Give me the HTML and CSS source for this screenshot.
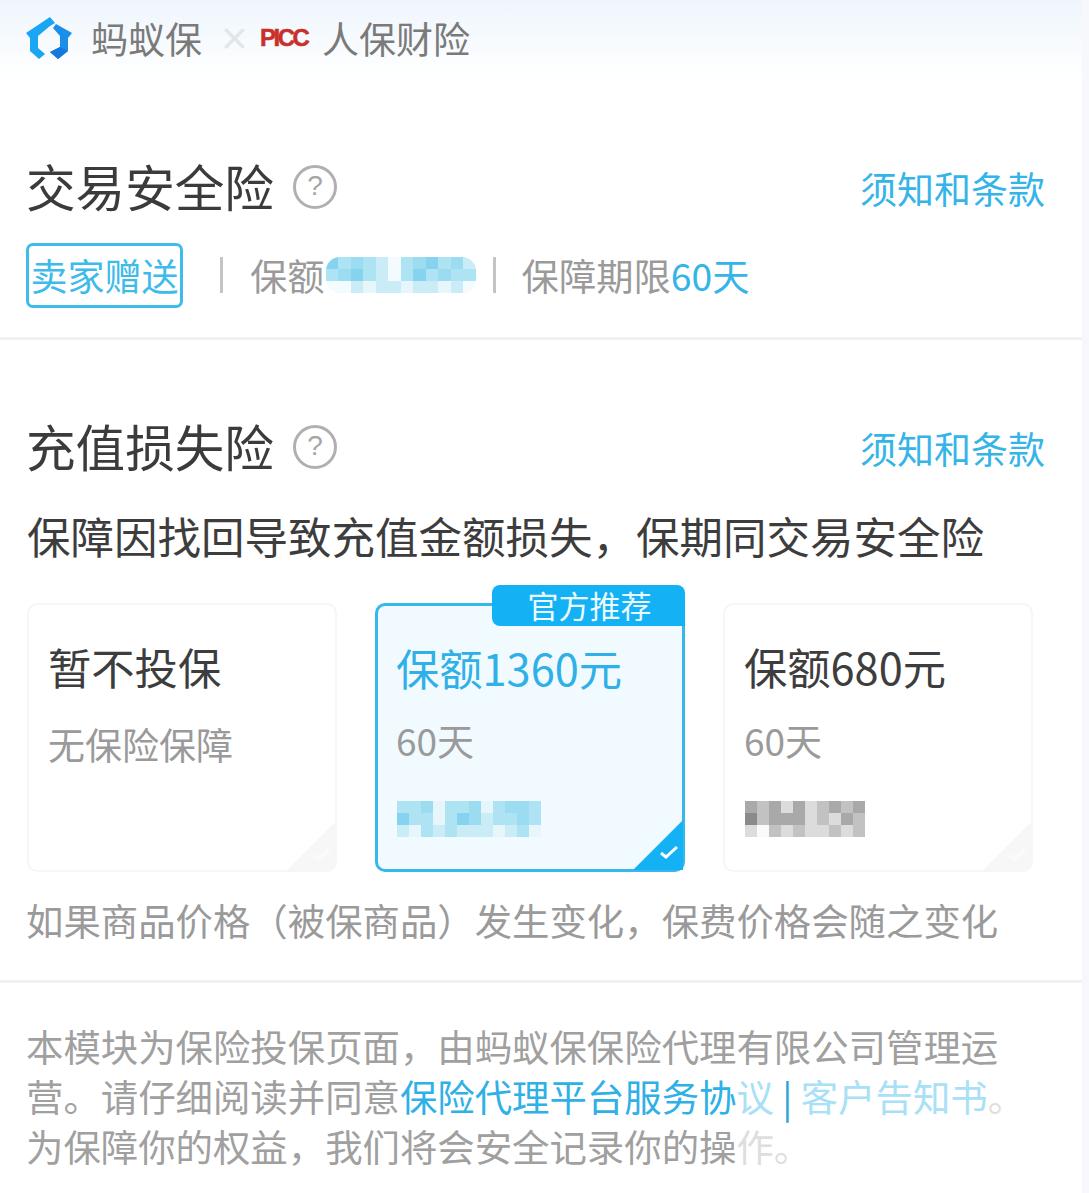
FILE: index.html
```html
<!DOCTYPE html>
<html lang="zh-CN">
<head>
    <meta charset="UTF-8">
    <meta name="viewport" content="width=device-width, initial-scale=1.0">
    <title>交易安全险</title>
    <link rel="stylesheet" href="styles.css">
</head>
<body>
    <div class="page">
        <div class="brand">
            <svg class="brand-logo" width="47" height="42" viewBox="0 0 47 42">
                <path d="M24 0 L0 16 L4 21 L4 34 L13 42 L19 37 L12 31 L12 19 L24 9 L29 6 Z" fill="#1aa5f5"/>
                <path d="M30 7 L46 16 L42 21 L42 34 L32 42 L24 35 L34 30 L34 19 L27 11 Z" fill="#1b8ee8"/>
                <path d="M32 42 L24 35 L34 30 L42 34 Z" fill="#1677dc"/>
            </svg>
            <span class="brand-name">蚂蚁保</span>
            <span class="brand-x">×</span>
            <span class="picc">PICC</span>
            <span class="brand-name">人保财险</span>
        </div>

        <div class="section section-first">
            <div class="title-row">
                <h2>交易安全险</h2>
                <span class="help">?</span>
                <a class="terms">须知和条款</a>
            </div>
            <div class="info-row">
                <span class="tag">卖家赠送</span>
                <span class="sep sep-a"></span>
                <span class="info">保额</span>
                <span class="mosaic mosaic-top">
                    <i class="b1"></i><i class="b3"></i><i class="b2"></i><i class="b3"></i><i class="b4"></i><i class="b0"></i><i class="b3"></i><i class="b2"></i><i class="b1"></i><i class="b3"></i><i class="b2"></i><i class="b4"></i>
                    <i class="b3"></i><i class="b2"></i><i class="b1"></i><i class="b3"></i><i class="b4"></i><i class="b0"></i><i class="b3"></i><i class="b1"></i><i class="b3"></i><i class="b2"></i><i class="b3"></i><i class="b3"></i>
                    <i class="b0"></i><i class="b0"></i><i class="b4"></i><i class="b5"></i><i class="b4"></i><i class="b4"></i><i class="b5"></i><i class="b4"></i><i class="b4"></i><i class="b5"></i><i class="b4"></i><i class="b0"></i>
                </span>
                <span class="sep sep-b"></span>
                <span class="info">保障期限<em>60天</em></span>
            </div>
        </div>

        <div class="section section-second">
            <div class="title-row">
                <h2>充值损失险</h2>
                <span class="help">?</span>
                <a class="terms">须知和条款</a>
            </div>
            <p class="desc">保障因找回导致充值金额损失，保期同交易安全险</p>
            <div class="plans">
                <div class="plan">
                    <div class="plan-name">暂不投保</div>
                    <div class="plan-sub">无保险保障</div>
                    <span class="corner">
                        <svg width="22" height="16" viewBox="0 0 22 16"><path d="M3 9 L8 13 L19 3" fill="none" stroke="#fbfbfb" stroke-width="3"/></svg>
                    </span>
                </div>
                <div class="plan plan-on">
                    <span class="badge">官方推荐</span>
                    <div class="plan-name">保额1360元</div>
                    <div class="plan-sub plan-days">60天</div>
                    <span class="mosaic mosaic-card">
                        <i class="b3"></i><i class="b3"></i><i class="b2"></i><i class="b5"></i><i class="b3"></i><i class="b3"></i><i class="b2"></i><i class="b5"></i><i class="b3"></i><i class="b2"></i><i class="b2"></i><i class="b3"></i>
                        <i class="b1"></i><i class="b3"></i><i class="b3"></i><i class="b5"></i><i class="b3"></i><i class="b1"></i><i class="b2"></i><i class="b4"></i><i class="b3"></i><i class="b3"></i><i class="b2"></i><i class="b3"></i>
                        <i class="b4"></i><i class="b5"></i><i class="b3"></i><i class="b4"></i><i class="b3"></i><i class="b4"></i><i class="b4"></i><i class="b4"></i><i class="b5"></i><i class="b4"></i><i class="b3"></i><i class="b5"></i>
                    </span>
                    <span class="corner">
                        <svg width="22" height="16" viewBox="0 0 22 16"><path d="M3 9 L8 13 L19 3" fill="none" stroke="#fff" stroke-width="3"/></svg>
                    </span>
                </div>
                <div class="plan">
                    <div class="plan-name">保额680元</div>
                    <div class="plan-sub plan-days">60天</div>
                    <span class="mosaic mosaic-gray">
                        <i class="g2"></i><i class="g3"></i><i class="g2"></i><i class="g4"></i><i class="g2"></i><i class="g4"></i><i class="g3"></i><i class="g2"></i><i class="g3"></i><i class="g2"></i>
                        <i class="g1"></i><i class="g3"></i><i class="g2"></i><i class="g2"></i><i class="g2"></i><i class="g4"></i><i class="g3"></i><i class="g4"></i><i class="g2"></i><i class="g3"></i>
                        <i class="g4"></i><i class="g5"></i><i class="g3"></i><i class="g4"></i><i class="g3"></i><i class="g4"></i><i class="g4"></i><i class="g3"></i><i class="g4"></i><i class="g3"></i>
                    </span>
                    <span class="corner">
                        <svg width="22" height="16" viewBox="0 0 22 16"><path d="M3 9 L8 13 L19 3" fill="none" stroke="#fbfbfb" stroke-width="3"/></svg>
                    </span>
                </div>
            </div>
            <p class="note">如果商品价格（被保商品）发生变化，保费价格会随之变化</p>
        </div>

        <div class="footer">
            本模块为保险投保页面，由蚂蚁保保险代理有限公司管理运<br>
            营。请仔细阅读并同意<span class="link">保险代理平台服务协</span><span class="link-fade">议</span><span class="link-bar"> | </span><span class="link-fade">客户告知书</span><span class="fade">。</span><br>
            为保障你的权益，我们将会安全记录你的操<span class="fade">作。</span>
        </div>
    </div>
</body>
</html>
```

FILE: styles.css
```css
* { box-sizing: border-box; }
body { margin: 0; background: #f7f8fc; font-family: "Noto Sans CJK SC", "Noto Sans", sans-serif; color: #333; }
.page { width: 1082px; height: 1193px; overflow: hidden; background: #fff; }

.brand { height: 80px; display: flex; align-items: center; padding-left: 26px; background: linear-gradient(180deg, #eef6fc 0%, #f6fafe 45%, #fff 100%); }
.brand-logo { margin: -4px 18px 0 0; }
.brand-name { margin-top: -4px; font-size: 37px; line-height: 50px; color: #7a7a7a; }
.brand-x { width: 24px; margin: -4px 15px 0 19px; font-size: 46px; line-height: 50px; font-weight: 400; color: #e3e6e9; text-align: center; font-family: "Liberation Sans", sans-serif; }
.picc { width: 62px; margin-top: -4px; font-family: "Liberation Sans", sans-serif; font-size: 24px; font-weight: bold; letter-spacing: -2.5px; color: #c9302a; -webkit-text-stroke: 0.5px #c9302a; }

.section { border-bottom: 3px solid #f1f1f1; padding-left: 26px; }
.section-first { height: 260px; padding-top: 75px; }
.section-second { height: 643px; padding-top: 75px; }

.title-row { display: flex; align-items: center; height: 60px; padding-right: 37px; }
h2 { margin: 0; font-size: 49.6px; line-height: 60px; font-weight: 400; color: #3b3b3b; }
.help { width: 44px; height: 44px; margin: 3px 0 0 19px; border: 3px solid #b0b0b0; border-radius: 50%; font-size: 28px; line-height: 36px; text-align: center; color: #a5a5a5; font-family: "Liberation Sans", sans-serif; }
.terms { margin: 6px 0 0 auto; font-size: 37px; line-height: 50px; color: #35b4e8; }

.info-row { display: flex; align-items: center; height: 66px; margin-top: 27px; }
.tag { width: 157px; height: 65px; border: 3px solid #3dbbea; border-radius: 7px; font-size: 37px; line-height: 58px; text-align: center; color: #3dbbea; white-space: nowrap; }
.sep { width: 3px; height: 36px; background: #c4c4c4; }
.sep-a { margin: 0 27px 0 37px; }
.sep-b { margin: 0 26px 0 17px; }
.info { font-size: 37.3px; line-height: 50px; color: #9a9a9a; }
.info em { font-style: normal; color: #35b4e8; }

.mosaic { display: grid; grid-auto-rows: 12px; }
.mosaic i { display: block; }
.mosaic-top { grid-template-columns: repeat(12, 12.5px); margin-left: 1px; border-radius: 14px; overflow: hidden; }
.mosaic-card { position: absolute; left: 19px; top: 195px; grid-template-columns: repeat(12, 12px); }
.mosaic-gray { position: absolute; left: 20px; top: 196px; grid-template-columns: repeat(10, 12px); }
.b0 { background: #f4fbfe; }
.b1 { background: #85d3ee; }
.b2 { background: #9bdcf1; }
.b3 { background: #aee3f4; }
.b4 { background: #c9ecf7; }
.b5 { background: #e6f6fb; }
.g1 { background: #8a8a8a; }
.g2 { background: #a9a9a9; }
.g3 { background: #c2c2c2; }
.g4 { background: #dcdcdc; }
.g5 { background: #fafafa; }

.desc { margin: 31px 0 0 1px; font-size: 43.5px; line-height: 60px; color: #3d3d3d; white-space: nowrap; }
.plans { display: flex; gap: 38px; margin: 37px 0 0 1px; }
.plan { position: relative; width: 310px; height: 269px; padding: 33px 19px 0; border: 2px solid #f6f6f6; border-radius: 10px; overflow: hidden; }
.plan-name { font-size: 43.3px; line-height: 56px; color: #3d3d3d; white-space: nowrap; }
.plan-sub { margin-top: 25px; font-size: 37px; line-height: 50px; color: #9a9a9a; }
.plan-days { margin-top: 21px; }
.plan-on { padding-left: 18px; overflow: visible; border: 3px solid #35b8ea; background: #f1fbff; }
.plan-on .plan-name { color: #2fb0e6; }
.plan-on .plan-days { margin-top: 20px; }
.badge { position: absolute; top: -21px; right: -3px; width: 193px; height: 41px; border-radius: 8px 8px 0 8px; background: #14b1f5; color: #eafaff; font-size: 31px; line-height: 40px; text-align: center; padding-left: 2px; }
.corner { position: absolute; right: 0; bottom: 0; width: 0; height: 0; border-style: solid; border-width: 0 0 48px 48px; border-color: transparent transparent #f7f7f7 transparent; }
.plan-on .corner { right: -1px; bottom: -1px; border-width: 0 0 50px 50px; border-bottom-color: #14b1f5; }
.corner svg { position: absolute; left: -25px; top: 24px; }

.note { margin: 23px 0 0; font-size: 37.4px; line-height: 50px; color: #9a9a9a; white-space: nowrap; }

.footer { padding: 38px 0 0 26px; font-size: 37.4px; line-height: 50px; color: #a0a0a0; white-space: nowrap; }
.link { color: #2fb0e6; }
.link-fade { color: #a8e0f5; }
.link-bar { color: #2fa3da; }
.fade { color: #dedede; }
```
